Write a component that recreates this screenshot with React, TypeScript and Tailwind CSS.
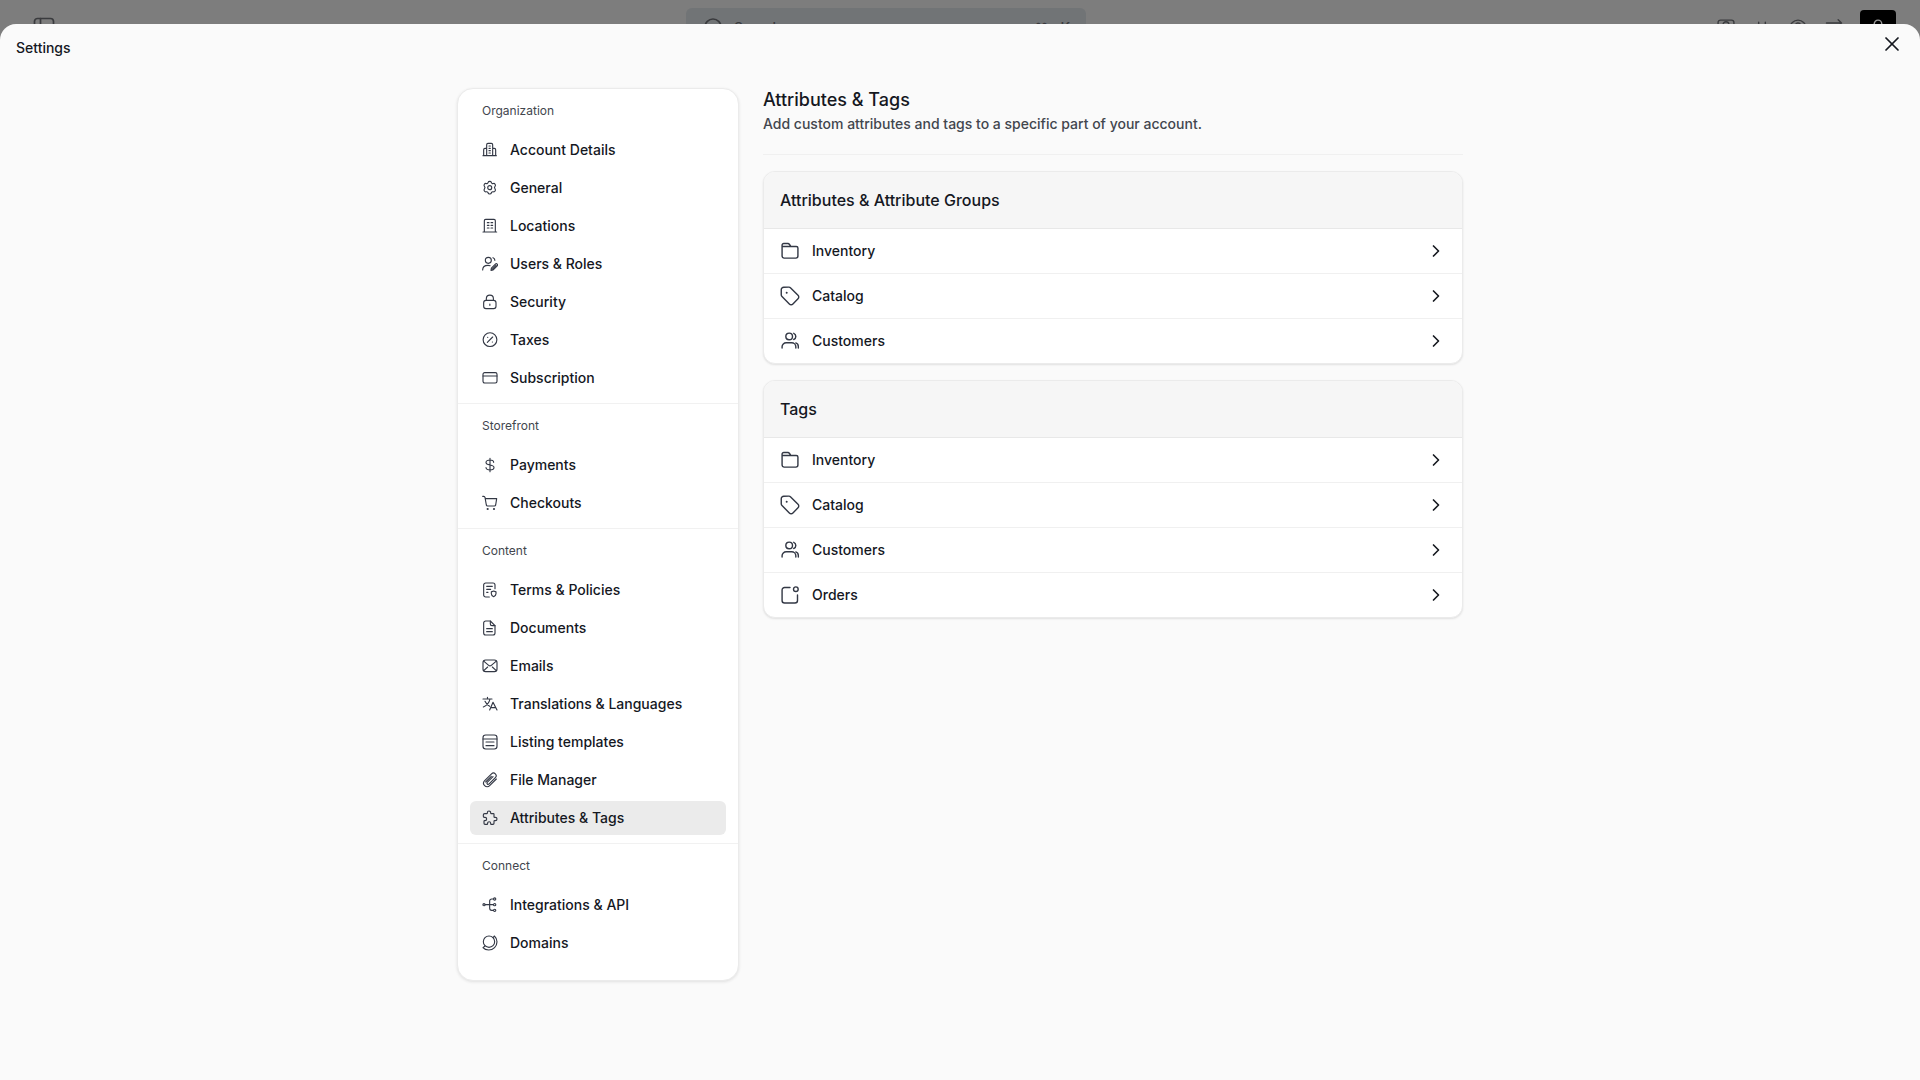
import { ReactNode, useState } from 'react';
import { ChevronRight, Languages, Search, X } from 'lucide-react';

interface IconProps {
  children: ReactNode;
  className?: string;
}

function Icon({ children, className = 'size-4' }: IconProps) {
  return (
    <svg
      viewBox="0 0 24 24"
      fill="none"
      stroke="currentColor"
      strokeWidth="1.7"
      strokeLinecap="round"
      strokeLinejoin="round"
      aria-hidden="true"
      className={`shrink-0 ${className}`}
    >
      {children}
    </svg>
  );
}

interface NavItem {
  label: string;
  icon: ReactNode;
}

interface NavSection {
  title: string;
  items: NavItem[];
}

const navSections: NavSection[] = [
  {
    title: 'Organization',
    items: [
      {
        label: 'Account Details',
        icon: (
          <Icon>
            <path d="M1.5 20.5h20M7 20.500V4a2 2 0 0 1 2-2h5a2 2 0 0 1 2 2v16.500M7 9.5H4.500a2 2 0 0 0-2 2v9M16 9.5h2.500a2 2 0 0 1 2 2v9" />
            <path d="M10.500 6h2M10.500 9.500h2M10.500 13h2M10.500 16.500h2" />
          </Icon>
        ),
      },
      {
        label: 'General',
        icon: (
          <Icon>
            <path d="M9.200 3.500c.6-2 4.200-2 4.800 0 .3 1.500 1.700 2.200 3.100 1.800 2-.7 3.900 2.400 2.600 4-1 1.100-1 3.300 0 4.400 1.300 1.600-.6 4.700-2.600 4-1.400-.4-2.800.3-3.100 1.800-.6 2-4.200 2-4.800 0-.3-1.500-1.700-2.200-3.100-1.800-2 .7-3.900-2.400-2.600-4 1-1.100 1-3.300 0-4.400-1.300-1.600.6-4.700 2.600-4 1.400.4 2.800-.3 3.100-1.800Z" />
            <circle cx="11.600" cy="11.500" r="3" />
          </Icon>
        ),
      },
      {
        label: 'Locations',
        icon: (
          <Icon>
            <path d="M1.500 21h20.500M3.500 21V4a2 2 0 0 1 2-2H18a2 2 0 0 1 2 2v17" />
            <path d="M8 7h2.500M13.500 7H16M8 11h2.500M13.500 11H16M8 15h2.500M13.500 15H16" />
          </Icon>
        ),
      },
      {
        label: 'Users & Roles',
        icon: (
          <Icon>
            <circle cx="9.500" cy="6.500" r="4.500" />
            <path d="M1 21c0-4.500 3.500-7 8-7 1.200 0 2.300.2 3.200.5M16.500 2.500c1.800.6 2.800 2.200 2.800 4" />
            <path d="m13.500 21.500.6-3.300 6-6a1.900 1.900 0 0 1 2.700 2.700l-6 6-3.300.6ZM15.500 19.800l5.500-5.600" />
          </Icon>
        ),
      },
      {
        label: 'Security',
        icon: (
          <Icon>
            <rect x="2.500" y="9.500" width="18.500" height="12.500" rx="3.500" />
            <path d="M6.500 9.500V7a5.300 5.300 0 0 1 10.600 0v2.500M11.800 15v2" />
          </Icon>
        ),
      },
      {
        label: 'Taxes',
        icon: (
          <Icon>
            <circle cx="12" cy="11.500" r="10.300" />
            <path d="m8 15.500 8-8M8.500 8h.2M15.500 15h.2" />
          </Icon>
        ),
      },
      {
        label: 'Subscription',
        icon: (
          <Icon>
            <rect x="1.500" y="4" width="21" height="15.500" rx="2.500" />
            <path d="M1.500 9h21" />
          </Icon>
        ),
      },
    ],
  },
  {
    title: 'Storefront',
    items: [
      {
        label: 'Payments',
        icon: (
          <Icon>
            <path d="M12 2v20M17.500 8c0-2-2-3.500-5.500-3.500S6 6 6 8.200c0 5.300 12 2.300 12 7.600 0 2.200-2.500 3.700-6 3.700s-6-1.500-6-3.700" />
          </Icon>
        ),
      },
      {
        label: 'Checkouts',
        icon: (
          <Icon>
            <path d="M1 2h1.500a2 2 0 0 1 2 1.700L6.500 15a2 2 0 0 0 2 1.500h10a2 2 0 0 0 2-1.500L22 5.500H5" />
            <circle cx="8.500" cy="21" r=".8" />
            <circle cx="18" cy="21" r=".8" />
          </Icon>
        ),
      },
    ],
  },
  {
    title: 'Content',
    items: [
      {
        label: 'Terms & Policies',
        icon: (
          <Icon>
            <path d="M11 22.500H5.500a3 3 0 0 1-3-3v-15a3 3 0 0 1 3-3h11a3 3 0 0 1 3 3V10M7 6.500h8.500M7 11h6M7 15.500h2" />
            <path d="m17.500 13.500 3.500 1.300v3c0 2-1.500 3.300-3.500 4.200-2.500-.9-3.500-2.200-3.500-4.200v-3Z" />
          </Icon>
        ),
      },
      {
        label: 'Documents',
        icon: (
          <Icon>
            <path d="M12.500 1.500h-7a3 3 0 0 0-3 3v15a3 3 0 0 0 3 3h11a3 3 0 0 0 3-3v-11Z" />
            <path d="M12.500 1.500V6a2.500 2.500 0 0 0 2.500 2.500h4.500M7 13h8.500M7 17.500h8.500" />
          </Icon>
        ),
      },
      {
        label: 'Emails',
        icon: (
          <Icon>
            <rect x="1.500" y="3" width="21" height="17.500" rx="4" />
            <path d="m3 5 7 6a3 3 0 0 0 4 0l7-6M3 18.500l5.500-5M21 18.500l-5.500-5" />
          </Icon>
        ),
      },
      {
        label: 'Translations & Languages',
        icon: (
          <Icon>
            <path d="M1.500 4.500h13.500M8.200 2v2.500M12 4.500C11 9.500 7.500 14 2 16.500M4.500 8c1.500 3.500 4 6 7 7.500" />
            <path d="m11.500 21 5-11.500L22.500 21M13.500 17.500h7" />
          </Icon>
        ),
      },
      {
        label: 'Listing templates',
        icon: (
          <Icon>
            <rect x="1.500" y="1.500" width="21" height="21" rx="4" />
            <path d="M1.500 7.500h21M6 12h12M6 17.500h12" />
          </Icon>
        ),
      },
      {
        label: 'File Manager',
        icon: (
          <Icon>
            <path d="m16.500 7-8.700 8.700a1.800 1.800 0 0 0 2.500 2.500L20 8.500a4 4 0 0 0-5.700-5.700L4 13a5.300 5.300 0 0 0 7.500 7.500L21.500 10.500" />
            <path d="m14 6.500-8.500 8.500" />
          </Icon>
        ),
      },
      {
        label: 'Attributes & Tags',
        icon: (
          <Icon>
            <path d="M4 5.500h3a1 1 0 0 0 1-1V4a2.500 2.500 0 0 1 5 0v.5a1 1 0 0 0 1 1h3a1 1 0 0 1 1 1V10a1 1 0 0 0 1 1h1a2.500 2.500 0 0 1 0 5h-1a1 1 0 0 0-1 1v3a1.500 1.500 0 0 1-1.500 1.500H14a1 1 0 0 1-1-1v-.5a2.300 2.300 0 0 0-4.600 0v.5a1 1 0 0 1-1 1H4.500A1.500 1.500 0 0 1 3 20v-3a1 1 0 0 1 1-1h.5a2.500 2.500 0 0 0 0-5H3.500A1.500 1.500 0 0 1 2 9.500V7.500a2 2 0 0 1 2-2" />
          </Icon>
        ),
      },
    ],
  },
  {
    title: 'Connect',
    items: [
      {
        label: 'Integrations & API',
        icon: (
          <Icon>
            <circle cx="3" cy="11.500" r="1.600" />
            <circle cx="19" cy="3" r="1.700" />
            <circle cx="19" cy="11.500" r="1.700" />
            <circle cx="19" cy="20" r="1.700" />
            <path d="M5 11.500h12M17 3h-2.500a3 3 0 0 0-3 3v11a3 3 0 0 0 3 3H17" />
          </Icon>
        ),
      },
      {
        label: 'Domains',
        icon: (
          <Icon>
            <circle cx="10.500" cy="10" r="8.500" />
            <path d="M18.500 1.500A12 12 0 0 1 22.500 10 12.500 12.500 0 0 1 10 22.500c-3.500 0-6.500-1.200-8.500-3.500M4.500 16.500 1.500 19M16.500 4l2-2.500" />
          </Icon>
        ),
      },
    ],
  },
];

const rowIcons: Record<string, ReactNode> = {
  Inventory: (
    <Icon className="size-5">
      <path d="M2.500 8V5a2 2 0 0 1 2-2h5a2 2 0 0 1 1.700.9L13 6.500h6.500a2 2 0 0 1 2 2V18a2.500 2.500 0 0 1-2.500 2.500H5A2.500 2.500 0 0 1 2.500 18V6.500H13" />
    </Icon>
  ),
  Catalog: (
    <Icon className="size-5">
      <path d="M1.500 4.500v6a3 3 0 0 0 .9 2.200l8.800 8.800a3 3 0 0 0 4.300 0l6.100-6.100a3 3 0 0 0 0-4.300l-8.800-8.800a3 3 0 0 0-2.200-.9H4.500a3 3 0 0 0-3 3.100Z" />
      <path d="M8 8h.01" strokeWidth="2.400" />
    </Icon>
  ),
  Customers: (
    <Icon className="size-5">
      <circle cx="11" cy="6.500" r="4" />
      <path d="M2.500 20.500V19a5 5 0 0 1 5-5h6.500a5 5 0 0 1 5 5v1.500M16.500 2.800a4 4 0 0 1 0 7.400M19 14.300a4.500 4.500 0 0 1 3 4.200v2" />
    </Icon>
  ),
  Orders: (
    <Icon className="size-5">
      <path d="M12 3H5.500a3 3 0 0 0-3 3v12.500a3 3 0 0 0 3 3H18a3 3 0 0 0 3-3V12" />
      <circle cx="19" cy="5" r="2.800" />
    </Icon>
  ),
};

const groups = [
  {
    title: 'Attributes & Attribute Groups',
    rows: ['Inventory', 'Catalog', 'Customers'],
  },
  {
    title: 'Tags',
    rows: ['Inventory', 'Catalog', 'Customers', 'Orders'],
  },
];

// The strip of the app that stays visible above the sheet
function AppHeader() {
  return (
    <header className="h-6 overflow-hidden">
      <div className="grid h-13 grid-cols-[45fr_400px_56fr] items-start gap-4 pr-6 pl-8 text-[#3a3b3e]">
        <button type="button" aria-label="Toggle sidebar" className="mt-4 size-6">
          <Icon className="size-6">
            <rect x="2.500" y="2.500" width="19" height="19" rx="3" />
            <path d="M8.500 2.500v19" />
          </Icon>
        </button>
        <button
          type="button"
          className="mt-2 flex h-10 items-center gap-2 rounded-md bg-[#717476] px-4 text-sm font-medium"
        >
          <Search strokeWidth={1.7} className="size-6" />
          Search
          <span className="ml-auto flex gap-3 text-sm">
            <span>⌘</span>
            <span>K</span>
          </span>
        </button>
        <div className="flex items-start justify-end gap-4">
          <button type="button" aria-label="Contacts" className="mt-4.5">
            <Icon className="size-5">
              <rect x="2.500" y="2.500" width="19" height="19" rx="3" />
              <circle cx="12" cy="8" r="3.500" />
            </Icon>
          </button>
          <button type="button" aria-label="Notifications" className="mt-4.5">
            <Icon className="size-5">
              <path d="M8 5v14M16 5v14M3 10h18" />
            </Icon>
          </button>
          <button type="button" aria-label="Help" className="mt-4.5">
            <Icon className="size-5">
              <circle cx="12" cy="12" r="9.500" />
              <path d="M9 9a3 3 0 0 1 6 0c0 2-3 2-3 4" />
            </Icon>
          </button>
          <button type="button" aria-label="Switch" className="mt-4.5">
            <Icon className="size-5">
              <path d="M3 6h18M17 2l4 4-4 4" />
            </Icon>
          </button>
          <button
            type="button"
            aria-label="Account"
            className="mt-2.5 flex size-9 items-start justify-center rounded-sm bg-black pt-2 text-[#999999]"
          >
            <Icon className="size-5">
              <circle cx="12" cy="7" r="4.500" />
              <path d="M3 22c0-5 4-8 9-8s9 3 9 8" />
            </Icon>
          </button>
        </div>
      </div>
    </header>
  );
}

interface SidebarProps {
  active: string;
  onSelect: (label: string) => void;
}

function Sidebar({ active, onSelect }: SidebarProps) {
  return (
    <nav
      aria-label="Settings"
      className="w-[282px] shrink-0 divide-y divide-[#f1f1f1] rounded-2xl border border-[#ebebeb] bg-white pb-3 shadow-[0_1px_3px_#e0e0e0]"
    >
      {navSections.map((section) => (
        <section key={section.title} className="px-3 pb-2">
          <h2 className="px-3 py-3.5 text-xs text-[#42464e]">{section.title}</h2>
          <ul className="flex flex-col gap-1">
            {section.items.map((item) => (
              <li key={item.label}>
                <button
                  type="button"
                  onClick={() => onSelect(item.label)}
                  className={`flex h-[34px] w-full items-center gap-3 rounded-md px-3 text-sm font-medium
                    ${active === item.label ? 'bg-[#ebebeb]' : 'hover:bg-gray-100'}`}
                >
                  <span className="text-[#333845]">{item.icon}</span>
                  {item.label}
                </button>
              </li>
            ))}
          </ul>
        </section>
      ))}
    </nav>
  );
}

export default function App() {
  const [active, setActive] = useState('Attributes & Tags');

  return (
    <div className="flex min-h-screen flex-col bg-[#7d7d7d] font-[Inter,sans-serif] text-[#15181f]">
      <AppHeader />
      <div
        role="dialog"
        aria-labelledby="sheet-title"
        className="grow rounded-t-2xl bg-[#fafafa]"
      >
        <div className="flex h-16 items-start justify-between px-4">
          <h1 id="sheet-title" className="pt-3 text-sm leading-6 font-medium">
            Settings
          </h1>
          <button type="button" aria-label="Close" className="pt-2">
            <X strokeWidth={1.7} className="size-6" />
          </button>
        </div>

        <div className="mx-auto flex max-w-[1006px] items-start gap-6 pb-24">
          <Sidebar active={active} onSelect={setActive} />

          <main className="min-w-0 grow pt-0.5">
            <div className="border-b border-[#f0f0f0] pb-5">
              <h2 className="text-lg leading-5 font-medium">Attributes &amp; Tags</h2>
              <p className="mt-1 text-sm font-medium text-[#42464e]">
                Add custom attributes and tags to a specific part of your account.
              </p>
            </div>

            <div className="mt-4 flex flex-col gap-4">
              {groups.map((group) => (
                <section
                  key={group.title}
                  className="overflow-hidden rounded-xl border border-[#ebebeb] bg-white shadow-[0_1px_2px_#e0e0e0]"
                >
                  <h3 className="border-b border-[#e8e8e8] bg-[#f6f6f6] px-4 py-4 leading-6 font-medium">
                    {group.title}
                  </h3>
                  <ul className="divide-y divide-[#f0f0f0]">
                    {group.rows.map((row) => (
                      <li key={row}>
                        <a
                          href="#"
                          className="flex h-11 items-center gap-3 px-4 text-sm font-medium hover:bg-gray-50"
                        >
                          <span className="text-[#333845]">{rowIcons[row]}</span>
                          {row}
                          <ChevronRight strokeWidth={2} className="ml-auto size-5" />
                        </a>
                      </li>
                    ))}
                  </ul>
                </section>
              ))}
            </div>
          </main>
        </div>
      </div>
    </div>
  );
}
